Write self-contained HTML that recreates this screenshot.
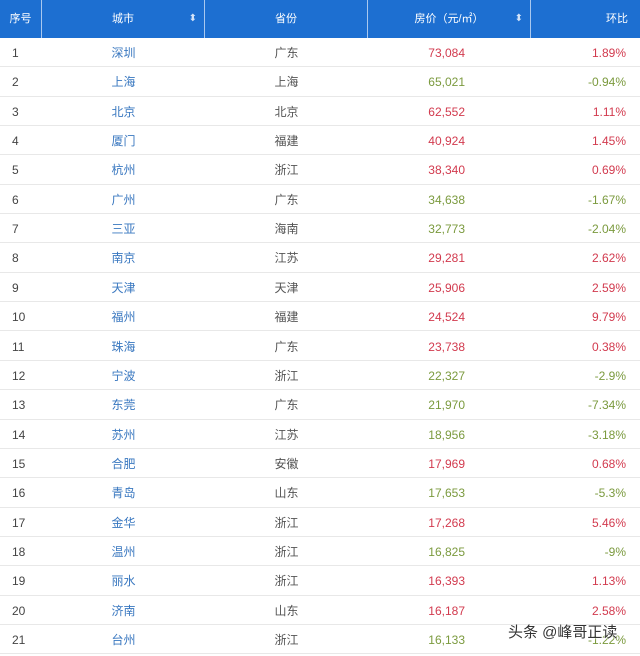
<!DOCTYPE html>
<html><head><meta charset="utf-8"><style>
*{margin:0;padding:0;box-sizing:border-box}
body{width:640px;height:654px;background:#fff;font-family:"Liberation Sans","Noto Sans CJK SC",sans-serif;font-size:12px;overflow:hidden;position:relative}
.hdr{position:absolute;left:0;top:0;width:640px;height:38px;background:#1d6fd1;color:#fff;font-size:11px}
.hdr div{position:absolute;top:0;height:38px;line-height:38px;border-right:1px solid #a9c8ef}
.r{position:absolute;left:0;width:640px;height:29.35px;border-bottom:1px solid #e8e8e8;line-height:31px;color:#444}
.r span{position:absolute;top:0}
.n{left:12px}
.c{left:42px;width:163px;text-align:center;color:#3a78c0}
.p{left:205px;width:163px;text-align:center;color:#555}
.v{right:175px;text-align:right}
.h{right:14px;text-align:right}
.up{color:#d23a4e}.dn{color:#7b9a3e}
.s{position:absolute;right:7px;top:0;font-size:10px;color:#d5e4f8}
.wm{position:absolute;left:508px;top:621px;font-size:15px;color:#333;text-shadow:0 0 2px #fff,0 0 2px #fff}
</style></head><body>
<div class="hdr">
<div style="left:0;width:42px;text-align:center">序号</div>
<div style="left:42px;width:163px;text-align:center">城市<span class="s">⬍</span></div>
<div style="left:205px;width:163px;text-align:center">省份</div>
<div style="left:368px;width:163px;text-align:center">房价（元/㎡）<span class="s">⬍</span></div>
<div style="left:531px;width:109px;text-align:right;padding-right:12px;border-right:none">环比</div>
</div>
<div class="r" style="top:38px"><span class="n">1</span><span class="c">深圳</span><span class="p">广东</span><span class="v up">73,084</span><span class="h up">1.89%</span></div>
<div class="r" style="top:67.35px"><span class="n">2</span><span class="c">上海</span><span class="p">上海</span><span class="v dn">65,021</span><span class="h dn">-0.94%</span></div>
<div class="r" style="top:96.7px"><span class="n">3</span><span class="c">北京</span><span class="p">北京</span><span class="v up">62,552</span><span class="h up">1.11%</span></div>
<div class="r" style="top:126.05px"><span class="n">4</span><span class="c">厦门</span><span class="p">福建</span><span class="v up">40,924</span><span class="h up">1.45%</span></div>
<div class="r" style="top:155.4px"><span class="n">5</span><span class="c">杭州</span><span class="p">浙江</span><span class="v up">38,340</span><span class="h up">0.69%</span></div>
<div class="r" style="top:184.75px"><span class="n">6</span><span class="c">广州</span><span class="p">广东</span><span class="v dn">34,638</span><span class="h dn">-1.67%</span></div>
<div class="r" style="top:214.1px"><span class="n">7</span><span class="c">三亚</span><span class="p">海南</span><span class="v dn">32,773</span><span class="h dn">-2.04%</span></div>
<div class="r" style="top:243.45px"><span class="n">8</span><span class="c">南京</span><span class="p">江苏</span><span class="v up">29,281</span><span class="h up">2.62%</span></div>
<div class="r" style="top:272.8px"><span class="n">9</span><span class="c">天津</span><span class="p">天津</span><span class="v up">25,906</span><span class="h up">2.59%</span></div>
<div class="r" style="top:302.15px"><span class="n">10</span><span class="c">福州</span><span class="p">福建</span><span class="v up">24,524</span><span class="h up">9.79%</span></div>
<div class="r" style="top:331.5px"><span class="n">11</span><span class="c">珠海</span><span class="p">广东</span><span class="v up">23,738</span><span class="h up">0.38%</span></div>
<div class="r" style="top:360.85px"><span class="n">12</span><span class="c">宁波</span><span class="p">浙江</span><span class="v dn">22,327</span><span class="h dn">-2.9%</span></div>
<div class="r" style="top:390.2px"><span class="n">13</span><span class="c">东莞</span><span class="p">广东</span><span class="v dn">21,970</span><span class="h dn">-7.34%</span></div>
<div class="r" style="top:419.55px"><span class="n">14</span><span class="c">苏州</span><span class="p">江苏</span><span class="v dn">18,956</span><span class="h dn">-3.18%</span></div>
<div class="r" style="top:448.9px"><span class="n">15</span><span class="c">合肥</span><span class="p">安徽</span><span class="v up">17,969</span><span class="h up">0.68%</span></div>
<div class="r" style="top:478.25px"><span class="n">16</span><span class="c">青岛</span><span class="p">山东</span><span class="v dn">17,653</span><span class="h dn">-5.3%</span></div>
<div class="r" style="top:507.6px"><span class="n">17</span><span class="c">金华</span><span class="p">浙江</span><span class="v up">17,268</span><span class="h up">5.46%</span></div>
<div class="r" style="top:536.95px"><span class="n">18</span><span class="c">温州</span><span class="p">浙江</span><span class="v dn">16,825</span><span class="h dn">-9%</span></div>
<div class="r" style="top:566.3px"><span class="n">19</span><span class="c">丽水</span><span class="p">浙江</span><span class="v up">16,393</span><span class="h up">1.13%</span></div>
<div class="r" style="top:595.65px"><span class="n">20</span><span class="c">济南</span><span class="p">山东</span><span class="v up">16,187</span><span class="h up">2.58%</span></div>
<div class="r" style="top:625px"><span class="n">21</span><span class="c">台州</span><span class="p">浙江</span><span class="v dn">16,133</span><span class="h dn">-1.22%</span></div>
<div class="wm">头条 @峰哥正读</div>
</body></html>
